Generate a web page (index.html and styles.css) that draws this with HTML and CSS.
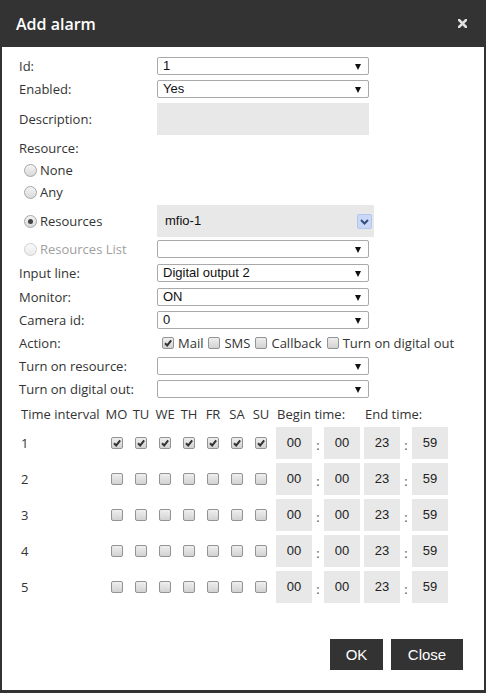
FILE: index.html
```html
<!DOCTYPE html>
<html>
<head>
<meta charset="utf-8">
<title>Add alarm</title>
<link rel="stylesheet" href="styles.css">
</head>
<body>
<div class="dialog">
  <div class="header">
    <span class="title">Add alarm</span>
    <svg class="close-x" width="9" height="9" viewBox="0 0 9 9"><path d="M1 1L8 8M8 1L1 8" stroke="#e0e0e0" stroke-width="2.6" stroke-linecap="square"/></svg>
  </div>
  <div class="body">
    <div class="form">
      <div class="row"><span class="lbl">Id:</span><div class="select">1</div></div>
      <div class="row"><span class="lbl">Enabled:</span><div class="select">Yes</div></div>
      <div class="row"><span class="lbl">Description:</span><div class="textbox"></div></div>
      <div class="row single m6"><span class="lbl">Resource:</span></div>
      <div class="row single m6"><span class="radio-wrap"><span class="radio"></span>None</span></div>
      <div class="row single"><span class="radio-wrap"><span class="radio"></span>Any</span></div>
      <div class="row m3"><span class="radio-wrap"><span class="radio checked"></span>Resources</span>
        <div class="resbox"><span>mfio-1</span><span class="dd"><svg width="15" height="15" viewBox="0 0 15 15"><path d="M4 6L7.5 9.5L11 6" fill="none" stroke="#39507e" stroke-width="2"/></svg></span></div>
      </div>
      <div class="row m6"><span class="radio-wrap disabled"><span class="radio"></span>Resources List</span><div class="select"></div></div>
      <div class="row m6"><span class="lbl">Input line:</span><div class="select">Digital output 2</div></div>
      <div class="row"><span class="lbl">Monitor:</span><div class="select">ON</div></div>
      <div class="row"><span class="lbl">Camera id:</span><div class="select">0</div></div>
      <div class="row m6"><span class="lbl">Action:</span>
        <div class="actions">
          <span class="cb on"><svg width="10" height="10" viewBox="0 0 10 10"><path d="M2 5.2L4.2 7.4L8.2 2.4" fill="none" stroke="#333" stroke-width="2"/></svg></span><span class="cbl">Mail</span>
          <span class="cb"></span><span class="cbl">SMS</span>
          <span class="cb"></span><span class="cbl">Callback</span>
          <span class="cb"></span><span class="cbl">Turn on digital out</span>
        </div>
      </div>
      <div class="row"><span class="lbl">Turn on resource:</span><div class="select"></div></div>
      <div class="row last"><span class="lbl">Turn on digital out:</span><div class="select"></div></div>
    </div>

    <div class="times">
      <div class="trow thead">
        <span class="tlabel">Time interval</span>
        <span class="day">MO</span><span class="day">TU</span><span class="day">WE</span><span class="day">TH</span><span class="day">FR</span><span class="day">SA</span><span class="day">SU</span>
        <span class="theads"><span class="th-begin">Begin time:</span><span>End time:</span></span>
      </div>
      <div class="trow">
        <span class="tlabel">1</span>
        <span class="day"><span class="cb on"><svg width="10" height="10" viewBox="0 0 10 10"><path d="M2 5.2L4.2 7.4L8.2 2.4" fill="none" stroke="#333" stroke-width="2"/></svg></span></span>
        <span class="day"><span class="cb on"><svg width="10" height="10" viewBox="0 0 10 10"><path d="M2 5.2L4.2 7.4L8.2 2.4" fill="none" stroke="#333" stroke-width="2"/></svg></span></span>
        <span class="day"><span class="cb on"><svg width="10" height="10" viewBox="0 0 10 10"><path d="M2 5.2L4.2 7.4L8.2 2.4" fill="none" stroke="#333" stroke-width="2"/></svg></span></span>
        <span class="day"><span class="cb on"><svg width="10" height="10" viewBox="0 0 10 10"><path d="M2 5.2L4.2 7.4L8.2 2.4" fill="none" stroke="#333" stroke-width="2"/></svg></span></span>
        <span class="day"><span class="cb on"><svg width="10" height="10" viewBox="0 0 10 10"><path d="M2 5.2L4.2 7.4L8.2 2.4" fill="none" stroke="#333" stroke-width="2"/></svg></span></span>
        <span class="day"><span class="cb on"><svg width="10" height="10" viewBox="0 0 10 10"><path d="M2 5.2L4.2 7.4L8.2 2.4" fill="none" stroke="#333" stroke-width="2"/></svg></span></span>
        <span class="day"><span class="cb on"><svg width="10" height="10" viewBox="0 0 10 10"><path d="M2 5.2L4.2 7.4L8.2 2.4" fill="none" stroke="#333" stroke-width="2"/></svg></span></span>
        <span class="tgroup"><span class="tbox">00</span><span class="colon">:</span><span class="tbox">00</span><span class="tbox end">23</span><span class="colon">:</span><span class="tbox">59</span></span>
      </div>
      <div class="trow">
        <span class="tlabel">2</span>
        <span class="day"><span class="cb"></span></span><span class="day"><span class="cb"></span></span><span class="day"><span class="cb"></span></span><span class="day"><span class="cb"></span></span><span class="day"><span class="cb"></span></span><span class="day"><span class="cb"></span></span><span class="day"><span class="cb"></span></span>
        <span class="tgroup"><span class="tbox">00</span><span class="colon">:</span><span class="tbox">00</span><span class="tbox end">23</span><span class="colon">:</span><span class="tbox">59</span></span>
      </div>
      <div class="trow">
        <span class="tlabel">3</span>
        <span class="day"><span class="cb"></span></span><span class="day"><span class="cb"></span></span><span class="day"><span class="cb"></span></span><span class="day"><span class="cb"></span></span><span class="day"><span class="cb"></span></span><span class="day"><span class="cb"></span></span><span class="day"><span class="cb"></span></span>
        <span class="tgroup"><span class="tbox">00</span><span class="colon">:</span><span class="tbox">00</span><span class="tbox end">23</span><span class="colon">:</span><span class="tbox">59</span></span>
      </div>
      <div class="trow">
        <span class="tlabel">4</span>
        <span class="day"><span class="cb"></span></span><span class="day"><span class="cb"></span></span><span class="day"><span class="cb"></span></span><span class="day"><span class="cb"></span></span><span class="day"><span class="cb"></span></span><span class="day"><span class="cb"></span></span><span class="day"><span class="cb"></span></span>
        <span class="tgroup"><span class="tbox">00</span><span class="colon">:</span><span class="tbox">00</span><span class="tbox end">23</span><span class="colon">:</span><span class="tbox">59</span></span>
      </div>
      <div class="trow">
        <span class="tlabel">5</span>
        <span class="day"><span class="cb"></span></span><span class="day"><span class="cb"></span></span><span class="day"><span class="cb"></span></span><span class="day"><span class="cb"></span></span><span class="day"><span class="cb"></span></span><span class="day"><span class="cb"></span></span><span class="day"><span class="cb"></span></span>
        <span class="tgroup"><span class="tbox">00</span><span class="colon">:</span><span class="tbox">00</span><span class="tbox end">23</span><span class="colon">:</span><span class="tbox">59</span></span>
      </div>
    </div>

    <div class="footer">
      <button class="btn btn-ok">OK</button>
      <button class="btn btn-close">Close</button>
    </div>
  </div>
</div>
</body>
</html>
```

FILE: styles.css
```css
* { box-sizing: border-box; }
html, body { margin: 0; padding: 0; }
body {
  font-family: "Open Sans", sans-serif;
  font-size: 13px;
  line-height: 16px;
  color: #333;
  background: #fff;
}
.dialog {
  width: 486px;
  height: 693px;
  display: flex;
  flex-direction: column;
  border: 2px solid #333;
  border-top: 0;
  border-bottom-width: 3px;
  background: #fff;
}
.header {
  height: 47px;
  flex: none;
  background: #333;
  display: flex;
  align-items: center;
  justify-content: space-between;
  padding: 0 17px 0 14px;
}
.title {
  color: #fff;
  font-size: 16px;
  font-weight: 600;
  line-height: 20px;
}
.close-x { display: block; }
.body {
  flex: 1;
  display: flex;
  flex-direction: column;
  padding: 10px 0 0 17px;
}
.row {
  display: grid;
  grid-template-columns: 138px auto;
  align-items: center;
  justify-content: start;
  margin-bottom: 5px;
}
.row.single { display: flex; height: 16px; }
.row.m6 { margin-bottom: 6px; }
.row.m3 { margin-bottom: 3px; }
.row.last { margin-bottom: 0; }
.lbl { white-space: nowrap; }
.select {
  position: relative;
  width: 212px;
  height: 18px;
  border: 1px solid #a9a9a9;
  border-radius: 2px;
  padding-left: 5px;
  font-family: "Liberation Sans", Arial, sans-serif;
  font-size: 13px;
  line-height: 16px;
  color: #111;
  background: #fff;
}
.select::after {
  content: "";
  position: absolute;
  right: 7px;
  top: 6px;
  border-top: 6px solid #111;
  border-left: 3px solid transparent;
  border-right: 3px solid transparent;
}
.textbox {
  width: 212px;
  height: 32px;
  background: #e8e8e8;
}
.resbox {
  width: 217px;
  height: 32px;
  background: #e8e8e8;
  display: flex;
  align-items: center;
  justify-content: space-between;
  padding: 0 2px 0 8px;
  font-family: "Liberation Sans", Arial, sans-serif;
  font-size: 13px;
  color: #111;
}
.dd {
  width: 15px;
  height: 15px;
  background: #c9d8f6;
  border: 1px solid #b3c6ee;
  border-radius: 2px;
  display: flex;
  align-items: center;
  justify-content: center;
}
.dd svg { display: block; margin: -1px; }
.radio-wrap {
  display: flex;
  align-items: center;
  white-space: nowrap;
  height: 16px;
}
.radio {
  width: 13px;
  height: 13px;
  margin: 0 3px 0 5px;
  border-radius: 50%;
  border: 1px solid #a6a6a6;
  background: linear-gradient(#f4f4f4, #d9d9d9);
  position: relative;
}
.radio.checked::after {
  content: "";
  position: absolute;
  left: 3px;
  top: 3px;
  width: 5px;
  height: 5px;
  border-radius: 50%;
  background: #444;
}
.radio-wrap.disabled { color: #a0a0a0; }
.radio-wrap.disabled .radio {
  border-color: #cfcfcf;
  background: linear-gradient(#fafafa, #eaeaea);
}
.actions {
  display: flex;
  align-items: center;
  height: 17px;
  white-space: nowrap;
}
.cb {
  width: 12px;
  height: 12px;
  border: 1px solid #939393;
  border-radius: 2px;
  background: linear-gradient(#efefef, #d2d2d2);
  display: inline-flex;
  align-items: center;
  justify-content: center;
  flex: none;
}
.cb svg { display: block; }
.actions .cb { margin: 0 4px 0 5px; }
.actions .cb:first-child { margin-left: 5px; }
.cbl { margin-right: 0; }
.times {
  margin-top: 8px;
  display: flex;
  flex-direction: column;
  gap: 4px;
}
.trow {
  display: grid;
  grid-template-columns: 85px 25px repeat(6, 24px) auto;
  align-items: center;
  height: 32px;
}
.trow.thead {
  height: 16px;
  margin-bottom: 1px;
}
.tlabel { padding-left: 2px; white-space: nowrap; }
.day {
  display: flex;
  justify-content: center;
  white-space: nowrap;
}
.theads { display: flex; white-space: nowrap; }
.th-begin { width: 92px; padding-left: 4px; }
.tgroup {
  display: flex;
  align-items: center;
  margin-left: 3px;
}
.tbox {
  width: 36px;
  height: 32px;
  background: #e8e8e8;
  display: flex;
  align-items: center;
  justify-content: center;
  font-family: "Liberation Sans", Arial, sans-serif;
  font-size: 13px;
  color: #222;
}
.tbox.end { margin-left: 4px; }
.colon {
  width: 12px;
  text-align: center;
  padding-top: 4px;
  color: #555;
}
.footer {
  margin-top: auto;
  display: flex;
  justify-content: flex-end;
  gap: 8px;
  padding: 0 21px 20px 0;
}
.btn {
  height: 31px;
  border: 0;
  background: #333;
  color: #fff;
  font-family: "Liberation Sans", Arial, sans-serif;
  font-size: 15px;
  padding: 0;
}
.btn-ok { width: 53px; }
.btn-close { width: 72px; }
```
